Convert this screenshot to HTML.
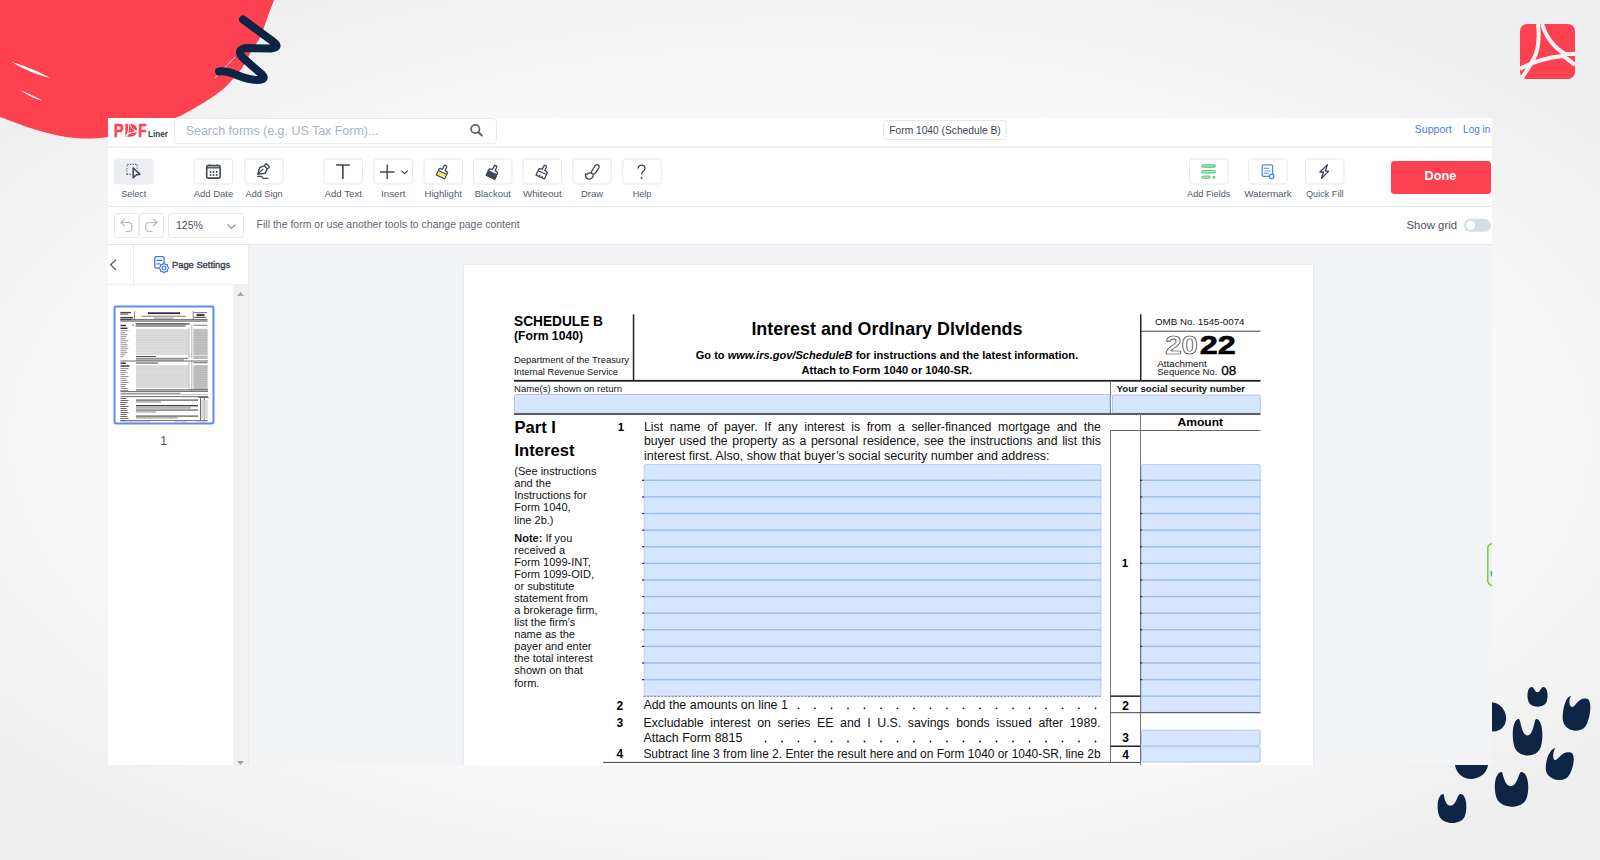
<!DOCTYPE html>
<html><head><meta charset="utf-8"><style>
html,body{margin:0;padding:0;width:1600px;height:860px;overflow:hidden;background:#f4f4f4}
svg{display:block;font-family:"Liberation Sans",sans-serif}
</style></head><body>
<svg width="1600" height="860" viewBox="0 0 1600 860">
<defs><radialGradient id="bg" gradientUnits="userSpaceOnUse" cx="0" cy="0" r="1000" gradientTransform="translate(800,440) scale(1,0.5)"><stop offset="0" stop-color="#fafafa"/><stop offset="0.72" stop-color="#f8f8f8"/><stop offset="0.88" stop-color="#f3f3f3"/><stop offset="1" stop-color="#efefef"/></radialGradient></defs>
<rect x="0" y="0" width="1600" height="860" fill="url(#bg)"/>
<path d="M274,0 C272.8,3.2 269.3,12.8 267,19 C264.7,25.2 262.5,32.3 260,37.5 C257.5,42.7 254.9,45.0 252,50 C249.1,55.0 246.5,61.7 242.4,67.5 C238.3,73.3 231.7,80.5 227.5,84.9 C223.3,89.3 220.9,90.8 217,93.7 C213.1,96.6 208.6,99.6 203.9,102.5 C199.2,105.4 193.5,108.7 189,111.2 C184.5,113.7 183.2,114.6 176.7,117.4 C170.2,120.2 161.4,124.7 150,128 C138.6,131.3 120.5,135.3 108,137 C95.5,138.7 86.3,139.0 75,138 C63.7,137.0 52.5,134.5 40,131 C27.5,127.5 6.7,119.3 0,117 L0,0 Z" fill="#fd4151"/>
<path d="M12,62 C25,66 40,72 50,78 C38,75 22,69 12,62 Z" fill="#fff"/>
<path d="M20,90 C28,93 36,97 43,101 C35,99 27,95 20,90 Z" fill="#fff"/>
<path d="M0,118 C5,120 10,122 14,124 C9,123 4,121 0,119 Z" fill="#fff"/>
<path d="M215,78 L235,57" stroke="#fff" stroke-width="0.8"/>
<path d="M243,19.5 L273,41.5 Q281,47.5 271,48.5 L247,48 Q236,49 242,57 L262,74.5 Q267,80 257,80 Q250,80 238,75.5 Q226,70.5 219,71.5" fill="none" stroke="#0d2445" stroke-width="8" stroke-linecap="round" stroke-linejoin="round"/>
<g transform="translate(1520,24)"><rect x="0" y="0" width="55" height="55" rx="7" fill="#fd4151"/><path d="M18,0 C19.5,14 18.5,27 13,36 C9,44 5,49 1,55" fill="none" stroke="#f4f4f4" stroke-width="4"/><path d="M22,0 C26,13 33,23 45,30 L55,30" fill="none" stroke="#f4f4f4" stroke-width="4"/><path d="M0,45 C12,38 25,34 42,32 C46,33 50,37 55,41" fill="none" stroke="#f4f4f4" stroke-width="4"/></g>
<path d="M1568.2,697.0 C1562.6,697.0 1561.2,713.2 1564.2,722.9 C1567.6,733.0 1584.4,733.7 1588.0,722.9 C1590.8,713.2 1589.4,697.0 1583.8,697.0 C1574.6,697.0 1574.2,707.8 1570.4,707.8 C1566.6,707.8 1566.2,697.0 1568.2,697.0 Z" fill="#0d2445" transform="rotate(10 1576.0 715.0)"/>
<path d="M1518.8,719.0 C1512.6,719.0 1511.1,736.5 1514.5,747.1 C1518.2,758.0 1536.8,758.8 1540.8,747.1 C1543.9,736.5 1542.4,719.0 1536.2,719.0 C1534.3,719.0 1533.6,735.4 1527.5,735.4 C1521.4,735.4 1520.7,719.0 1518.8,719.0 Z" fill="#0d2445"/>
<path d="M1501.7,772.0 C1494.7,772.0 1493.0,788.6 1496.8,798.6 C1501.0,809.0 1522.0,809.7 1526.5,798.6 C1530.0,788.6 1528.3,772.0 1521.3,772.0 C1518.5,772.0 1517.7,786.1 1510.8,786.1 C1503.9,786.1 1503.1,772.0 1501.7,772.0 Z" fill="#0d2445"/>
<path d="M1443.6,794.0 C1437.6,794.0 1436.1,808.0 1439.4,816.3 C1443.0,825.0 1461.0,825.6 1464.9,816.3 C1467.9,808.0 1466.4,794.0 1460.4,794.0 C1457.1,794.0 1456.4,805.8 1450.5,805.8 C1444.6,805.8 1443.9,794.0 1443.6,794.0 Z" fill="#0d2445"/>
<path d="M1551.2,750.0 C1545.6,750.0 1544.2,764.4 1547.2,773.0 C1550.6,782.0 1567.4,782.6 1571.0,773.0 C1573.8,764.4 1572.4,750.0 1566.8,750.0 C1557.3,750.0 1556.9,761.2 1553.4,761.2 C1549.9,761.2 1549.5,750.0 1551.2,750.0 Z" fill="#0d2445" transform="rotate(15 1559.0 766.0)"/>
<path d="M1531.6,687.0 C1527.4,687.0 1526.4,696.5 1528.7,702.1 C1531.2,708.0 1543.8,708.4 1546.5,702.1 C1548.6,696.5 1547.6,687.0 1543.4,687.0 C1540.7,687.0 1540.3,692.2 1537.5,692.2 C1534.7,692.2 1534.3,687.0 1531.6,687.0 Z" fill="#0d2445"/>
<path d="M1488,703 C1500,700 1507,712 1506,720 C1505,728 1498,733 1490,731 Z" fill="#0d2445"/>
<path d="M1455,765 L1488,765 C1487,774 1478,779 1471,779 C1463,779 1456,773 1455,765 Z" fill="#0d2445"/>
<rect x="108" y="118" width="1384" height="647" fill="#fff"/>
<rect x="108" y="146" width="1384" height="2" fill="#eff1f4"/>
<rect x="108" y="206" width="1384" height="1" fill="#e4e7ed"/>
<rect x="108" y="244" width="1384" height="1" fill="#e4e7ed"/>
<text x="113.80" y="136.70" font-size="18.2" font-weight="bold" fill="#fd4151" textLength="9.90" lengthAdjust="spacingAndGlyphs" stroke="#fd4151" stroke-width="0.5">P</text>
<text x="138.20" y="136.70" font-size="18.2" font-weight="bold" fill="#fd4151" textLength="8.40" lengthAdjust="spacingAndGlyphs" stroke="#fd4151" stroke-width="0.5">F</text>
<path d="M125.3,123.8 L130,123.8 C135,123.8 137,127 137,130.2 C137,133.5 135,136.7 130,136.7 L125.3,136.7 Z" fill="#fd4151"/>
<path d="M128.2,123.4 C129.2,128 128.6,132.5 126.2,137.2" fill="none" stroke="#fff" stroke-width="1.1"/>
<path d="M129.6,123.4 C130.8,127.5 132.8,130 137.4,131.2" fill="none" stroke="#fff" stroke-width="0.9"/>
<path d="M125.6,136 C128.5,133 131.5,131.9 137.4,131.6" fill="none" stroke="#fff" stroke-width="1.1"/>
<text x="148.00" y="137.00" font-size="9.4" font-weight="bold" fill="#333b4d" textLength="20.00" lengthAdjust="spacingAndGlyphs">Liner</text>
<rect x="174.5" y="118.5" width="322" height="25.25" fill="#fff" stroke="#e6e9ee" stroke-width="1" rx="4"/>
<text x="185.70" y="134.80" font-size="12.3" fill="#aab3c5" textLength="192.60" lengthAdjust="spacingAndGlyphs">Search forms (e.g. US Tax Form)...</text>
<circle cx="475.3" cy="129" r="4.2" fill="none" stroke="#5f6675" stroke-width="1.8"/>
<line x1="478.3" y1="132" x2="481.8" y2="135.5" stroke="#5f6675" stroke-width="2" stroke-linecap="round"/>
<rect x="883.5" y="120.5" width="122.5" height="19" fill="#fff" stroke="#e3e6ec" stroke-width="1" rx="3"/>
<text x="889.30" y="134.20" font-size="11.2" fill="#3d4452" textLength="111.40" lengthAdjust="spacingAndGlyphs">Form 1040 (Schedule B)</text>
<text x="1414.80" y="133.40" font-size="11.3" fill="#4c7ce3" textLength="37.00" lengthAdjust="spacingAndGlyphs">Support</text>
<text x="1463.10" y="133.40" font-size="11.3" fill="#4c7ce3" textLength="27.30" lengthAdjust="spacingAndGlyphs">Log in</text>
<rect x="114" y="158.5" width="39.5" height="26" fill="#eceef1" rx="3"/>
<text x="121.20" y="197.10" font-size="9.8" fill="#535b6b" textLength="25.10" lengthAdjust="spacingAndGlyphs">Select</text>
<rect x="194.2" y="159.0" width="38.5" height="25" fill="#fff" stroke="#e6e9ee" stroke-width="1" rx="3"/>
<text x="193.70" y="197.10" font-size="9.8" fill="#535b6b" textLength="39.50" lengthAdjust="spacingAndGlyphs">Add Date</text>
<rect x="244.8" y="159.0" width="38.5" height="25" fill="#fff" stroke="#e6e9ee" stroke-width="1" rx="3"/>
<text x="245.55" y="197.10" font-size="9.8" fill="#535b6b" textLength="37.00" lengthAdjust="spacingAndGlyphs">Add Sign</text>
<rect x="324.0" y="159.0" width="38.5" height="25" fill="#fff" stroke="#e6e9ee" stroke-width="1" rx="3"/>
<text x="324.50" y="197.10" font-size="9.8" fill="#535b6b" textLength="37.50" lengthAdjust="spacingAndGlyphs">Add Text</text>
<rect x="374.0" y="159.0" width="38.5" height="25" fill="#fff" stroke="#e6e9ee" stroke-width="1" rx="3"/>
<text x="381.00" y="197.10" font-size="9.8" fill="#535b6b" textLength="24.50" lengthAdjust="spacingAndGlyphs">Insert</text>
<rect x="424.0" y="159.0" width="38.5" height="25" fill="#fff" stroke="#e6e9ee" stroke-width="1" rx="3"/>
<text x="424.50" y="197.10" font-size="9.8" fill="#535b6b" textLength="37.50" lengthAdjust="spacingAndGlyphs">Highlight</text>
<rect x="473.5" y="159.0" width="38.5" height="25" fill="#fff" stroke="#e6e9ee" stroke-width="1" rx="3"/>
<text x="474.65" y="197.10" font-size="9.8" fill="#535b6b" textLength="36.20" lengthAdjust="spacingAndGlyphs">Blackout</text>
<rect x="523.0" y="159.0" width="38.5" height="25" fill="#fff" stroke="#e6e9ee" stroke-width="1" rx="3"/>
<text x="522.88" y="197.10" font-size="9.8" fill="#535b6b" textLength="38.75" lengthAdjust="spacingAndGlyphs">Whiteout</text>
<rect x="572.8" y="159.0" width="38.5" height="25" fill="#fff" stroke="#e6e9ee" stroke-width="1" rx="3"/>
<text x="581.00" y="197.10" font-size="9.8" fill="#535b6b" textLength="22.10" lengthAdjust="spacingAndGlyphs">Draw</text>
<rect x="622.8" y="159.0" width="38.5" height="25" fill="#fff" stroke="#e6e9ee" stroke-width="1" rx="3"/>
<text x="632.67" y="197.10" font-size="9.8" fill="#535b6b" textLength="18.75" lengthAdjust="spacingAndGlyphs">Help</text>
<rect x="1189.5" y="159.0" width="38.5" height="25" fill="#fff" stroke="#e6e9ee" stroke-width="1" rx="3"/>
<text x="1187.10" y="197.10" font-size="9.8" fill="#535b6b" textLength="43.30" lengthAdjust="spacingAndGlyphs">Add Fields</text>
<rect x="1248.7" y="159.0" width="38.5" height="25" fill="#fff" stroke="#e6e9ee" stroke-width="1" rx="3"/>
<text x="1244.15" y="197.10" font-size="9.8" fill="#535b6b" textLength="47.60" lengthAdjust="spacingAndGlyphs">Watermark</text>
<rect x="1305.5" y="159.0" width="38.5" height="25" fill="#fff" stroke="#e6e9ee" stroke-width="1" rx="3"/>
<text x="1306.00" y="197.10" font-size="9.8" fill="#535b6b" textLength="37.50" lengthAdjust="spacingAndGlyphs">Quick Fill</text>
<rect x="1391" y="161" width="100" height="33" fill="#fd4151" rx="3.5"/>
<text x="1424.60" y="180.30" font-size="12" font-weight="bold" fill="#fff" textLength="31.70" lengthAdjust="spacingAndGlyphs">Done</text>
<rect x="114.5" y="213.5" width="24" height="24" fill="#fff" stroke="#e6e9ee" stroke-width="1" rx="2"/>
<rect x="139.5" y="213.5" width="24" height="24" fill="#fff" stroke="#e6e9ee" stroke-width="1" rx="2"/>
<rect x="168.5" y="213.5" width="75" height="24" fill="#fff" stroke="#e6e9ee" stroke-width="1" rx="2"/>
<text x="176.00" y="229.00" font-size="10.6" fill="#4a5160" textLength="27.00" lengthAdjust="spacingAndGlyphs">125%</text>
<path d="M227.5,224.5 L231.5,228.5 L235.5,224.5" fill="none" stroke="#8a909c" stroke-width="1.2"/>
<path d="M120.8,222.5 L124.5,218.8 M120.8,222.5 L124.5,226.2 M121,222.5 L128,222.5 Q132,222.5 132,227 Q132,231.5 128,231.5 L126,231.5" fill="none" stroke="#b5b9c2" stroke-width="1.2" stroke-linecap="round"/>
<path d="M157,222.5 L153.3,218.8 M157,222.5 L153.3,226.2 M157,222.5 L150,222.5 Q145.5,222.5 145.5,227 Q145.5,231.5 150,231.5 L152,231.5" fill="none" stroke="#b5b9c2" stroke-width="1.2" stroke-linecap="round"/>
<text x="256.60" y="228.40" font-size="11" fill="#5f6675" textLength="263.00" lengthAdjust="spacingAndGlyphs">Fill the form or use another tools to change page content</text>
<text x="1406.50" y="229.40" font-size="11.3" fill="#4a5160" textLength="50.60" lengthAdjust="spacingAndGlyphs">Show grid</text>
<rect x="1464" y="218.8" width="27" height="13" fill="#d8dce3" rx="6.5"/>
<circle cx="1470.6" cy="225.3" r="4.6" fill="#fff"/>
<rect x="249" y="245" width="1243" height="520" fill="#f3f4f6"/>
<rect x="108" y="245" width="141" height="520" fill="#fff"/>
<rect x="133" y="245" width="1" height="39" fill="#e8eaee"/>
<rect x="108" y="284" width="141" height="1" fill="#eef0f3"/>
<rect x="233" y="285" width="15" height="480" fill="#f1f1f1"/>
<rect x="248" y="245" width="1" height="520" fill="#e9ebef"/>
<path d="M237,296 L240.5,292 L244,296 Z" fill="#a3a3a3"/>
<path d="M237,761 L240.5,765 L244,761 Z" fill="#a3a3a3"/>
<path d="M116,259.5 L110.7,264.8 L116,270" fill="none" stroke="#5f6675" stroke-width="1.4"/>
<text x="172.00" y="268.10" font-size="9.6" fill="#363d4b" textLength="58.10" lengthAdjust="spacingAndGlyphs" stroke="#363d4b" stroke-width="0.35">Page Settings</text>
<rect x="114.5" y="306.5" width="99" height="117" fill="#fff" stroke="#5b8def" stroke-width="2" rx="2"/>
<text x="163.50" y="444.50" font-size="12" fill="#4a5160" text-anchor="middle">1</text>
<rect x="120.3" y="311.9" width="10.6" height="1.3" fill="#444"/>
<rect x="120.3" y="313.6" width="8" height="1.1" fill="#555"/>
<rect x="120.3" y="316.9" width="12.7" height="1.6" fill="#444"/>
<rect x="120.3" y="319.0" width="11" height="1.2" fill="#666"/>
<rect x="134.0" y="311.3" width="0.7" height="8.5" fill="#555"/>
<rect x="148" y="312.3" width="32" height="1.8" fill="#333"/>
<rect x="141.5" y="315.7" width="44.4" height="1.1" fill="#888"/>
<rect x="154" y="317.6" width="19.4" height="1.1" fill="#999"/>
<rect x="193.6" y="312" width="13.5" height="0.9" fill="#777"/>
<rect x="196.5" y="313.8" width="8" height="2.4" fill="#444"/>
<rect x="194" y="316.8" width="12" height="1.2" fill="#666"/>
<rect x="192.8" y="311.3" width="0.7" height="8.5" fill="#555"/>
<rect x="120.3" y="319.3" width="87.2" height="1.2" fill="#444"/>
<rect x="120.3" y="321.2" width="87.2" height="0.7" fill="#777"/>
<rect x="120.5" y="324.8" width="5.5" height="1.4" fill="#333"/>
<rect x="120.5" y="327.6" width="7" height="1.4" fill="#333"/>
<rect x="120.5" y="330.3" width="8" height="0.9" fill="#888"/>
<rect x="120.5" y="332.3" width="5" height="0.9" fill="#888"/>
<rect x="120.5" y="334.3" width="7" height="0.9" fill="#888"/>
<rect x="120.5" y="336.3" width="6" height="0.9" fill="#888"/>
<rect x="120.5" y="338.3" width="5" height="0.9" fill="#888"/>
<rect x="120.5" y="340.3" width="8" height="0.9" fill="#888"/>
<rect x="120.5" y="342.3" width="6" height="0.9" fill="#888"/>
<rect x="120.5" y="344.3" width="7" height="0.9" fill="#888"/>
<rect x="120.5" y="346.3" width="7" height="0.9" fill="#888"/>
<rect x="120.5" y="348.3" width="8" height="0.9" fill="#888"/>
<rect x="120.5" y="350.3" width="6" height="0.9" fill="#888"/>
<rect x="120.5" y="352.3" width="7" height="0.9" fill="#888"/>
<rect x="120.5" y="354.3" width="5" height="0.9" fill="#888"/>
<rect x="120.5" y="356.3" width="3" height="0.9" fill="#888"/>
<rect x="132.5" y="324.6" width="1.2" height="1.3" fill="#555"/>
<rect x="135.6" y="323.2" width="54" height="1.5" fill="#555"/>
<rect x="135.6" y="325.4" width="50" height="1.3" fill="#666"/>
<rect x="136" y="328.8" width="52.5" height="26.2" fill="#dedede"/>
<rect x="136" y="331.8" width="52.5" height="0.35" fill="#c9c9c9"/>
<rect x="136" y="333.6" width="52.5" height="0.35" fill="#c9c9c9"/>
<rect x="136" y="335.40000000000003" width="52.5" height="0.35" fill="#c9c9c9"/>
<rect x="136" y="337.2" width="52.5" height="0.35" fill="#c9c9c9"/>
<rect x="136" y="339.0" width="52.5" height="0.35" fill="#c9c9c9"/>
<rect x="136" y="340.8" width="52.5" height="0.35" fill="#c9c9c9"/>
<rect x="136" y="342.6" width="52.5" height="0.35" fill="#c9c9c9"/>
<rect x="136" y="344.40000000000003" width="52.5" height="0.35" fill="#c9c9c9"/>
<rect x="136" y="346.2" width="52.5" height="0.35" fill="#c9c9c9"/>
<rect x="136" y="348.0" width="52.5" height="0.35" fill="#c9c9c9"/>
<rect x="136" y="349.8" width="52.5" height="0.35" fill="#c9c9c9"/>
<rect x="136" y="351.6" width="52.5" height="0.35" fill="#c9c9c9"/>
<rect x="136" y="353.40000000000003" width="52.5" height="0.35" fill="#c9c9c9"/>
<rect x="188.7" y="327.5" width="0.6" height="31" fill="#888"/>
<rect x="191.6" y="324.5" width="0.6" height="34" fill="#777"/>
<rect x="193.4" y="324.6" width="14" height="1.3" fill="#999"/>
<rect x="193.4" y="328.8" width="14.2" height="26.2" fill="#c2c2c2"/>
<rect x="193.4" y="331.8" width="14.2" height="0.35" fill="#aaa"/>
<rect x="193.4" y="333.6" width="14.2" height="0.35" fill="#aaa"/>
<rect x="193.4" y="335.40000000000003" width="14.2" height="0.35" fill="#aaa"/>
<rect x="193.4" y="337.2" width="14.2" height="0.35" fill="#aaa"/>
<rect x="193.4" y="339.0" width="14.2" height="0.35" fill="#aaa"/>
<rect x="193.4" y="340.8" width="14.2" height="0.35" fill="#aaa"/>
<rect x="193.4" y="342.6" width="14.2" height="0.35" fill="#aaa"/>
<rect x="193.4" y="344.40000000000003" width="14.2" height="0.35" fill="#aaa"/>
<rect x="193.4" y="346.2" width="14.2" height="0.35" fill="#aaa"/>
<rect x="193.4" y="348.0" width="14.2" height="0.35" fill="#aaa"/>
<rect x="193.4" y="349.8" width="14.2" height="0.35" fill="#aaa"/>
<rect x="193.4" y="351.6" width="14.2" height="0.35" fill="#aaa"/>
<rect x="193.4" y="353.40000000000003" width="14.2" height="0.35" fill="#aaa"/>
<rect x="136" y="356" width="20" height="1.0" fill="#555"/>
<rect x="136" y="357.8" width="52" height="0.9" fill="#666"/>
<rect x="136" y="359.5" width="48" height="0.9" fill="#666"/>
<rect x="193.4" y="355.5" width="14.2" height="3.5" fill="#bbb"/>
<rect x="120.5" y="360.6" width="87.5" height="0.8" fill="#444"/>
<rect x="120.5" y="362.5" width="5.5" height="1.4" fill="#333"/>
<rect x="120.5" y="365.3" width="9" height="1.4" fill="#333"/>
<rect x="120.5" y="368.0" width="8" height="0.9" fill="#888"/>
<rect x="120.5" y="370.0" width="6" height="0.9" fill="#888"/>
<rect x="120.5" y="372.0" width="7" height="0.9" fill="#888"/>
<rect x="120.5" y="374.0" width="5" height="0.9" fill="#888"/>
<rect x="120.5" y="376.0" width="8" height="0.9" fill="#888"/>
<rect x="120.5" y="378.0" width="6" height="0.9" fill="#888"/>
<rect x="120.5" y="380.0" width="7" height="0.9" fill="#888"/>
<rect x="120.5" y="382.0" width="8" height="0.9" fill="#888"/>
<rect x="120.5" y="384.0" width="6" height="0.9" fill="#888"/>
<rect x="120.5" y="386.0" width="5" height="0.9" fill="#888"/>
<rect x="120.5" y="388.0" width="7" height="0.9" fill="#888"/>
<rect x="120.5" y="390.0" width="8" height="0.9" fill="#888"/>
<rect x="136" y="362.5" width="22" height="1.1" fill="#555"/>
<rect x="193.4" y="362" width="14" height="1.3" fill="#888"/>
<rect x="136" y="365" width="52.5" height="23" fill="#dedede"/>
<rect x="136" y="366.8" width="52.5" height="0.35" fill="#c9c9c9"/>
<rect x="136" y="368.6" width="52.5" height="0.35" fill="#c9c9c9"/>
<rect x="136" y="370.40000000000003" width="52.5" height="0.35" fill="#c9c9c9"/>
<rect x="136" y="372.2" width="52.5" height="0.35" fill="#c9c9c9"/>
<rect x="136" y="374.0" width="52.5" height="0.35" fill="#c9c9c9"/>
<rect x="136" y="375.8" width="52.5" height="0.35" fill="#c9c9c9"/>
<rect x="136" y="377.6" width="52.5" height="0.35" fill="#c9c9c9"/>
<rect x="136" y="379.40000000000003" width="52.5" height="0.35" fill="#c9c9c9"/>
<rect x="136" y="381.2" width="52.5" height="0.35" fill="#c9c9c9"/>
<rect x="136" y="383.0" width="52.5" height="0.35" fill="#c9c9c9"/>
<rect x="136" y="384.8" width="52.5" height="0.35" fill="#c9c9c9"/>
<rect x="136" y="386.6" width="52.5" height="0.35" fill="#c9c9c9"/>
<rect x="188.7" y="362" width="0.6" height="28" fill="#888"/>
<rect x="191.6" y="361" width="0.6" height="30" fill="#777"/>
<rect x="193.4" y="365" width="14.2" height="25" fill="#c2c2c2"/>
<rect x="193.4" y="366.8" width="14.2" height="0.35" fill="#aaa"/>
<rect x="193.4" y="368.6" width="14.2" height="0.35" fill="#aaa"/>
<rect x="193.4" y="370.40000000000003" width="14.2" height="0.35" fill="#aaa"/>
<rect x="193.4" y="372.2" width="14.2" height="0.35" fill="#aaa"/>
<rect x="193.4" y="374.0" width="14.2" height="0.35" fill="#aaa"/>
<rect x="193.4" y="375.8" width="14.2" height="0.35" fill="#aaa"/>
<rect x="193.4" y="377.6" width="14.2" height="0.35" fill="#aaa"/>
<rect x="193.4" y="379.40000000000003" width="14.2" height="0.35" fill="#aaa"/>
<rect x="193.4" y="381.2" width="14.2" height="0.35" fill="#aaa"/>
<rect x="193.4" y="383.0" width="14.2" height="0.35" fill="#aaa"/>
<rect x="193.4" y="384.8" width="14.2" height="0.35" fill="#aaa"/>
<rect x="193.4" y="386.6" width="14.2" height="0.35" fill="#aaa"/>
<rect x="193.4" y="388.40000000000003" width="14.2" height="0.35" fill="#aaa"/>
<rect x="136" y="389.4" width="72" height="1.0" fill="#444"/>
<rect x="120.5" y="391" width="87.5" height="0.9" fill="#666"/>
<rect x="120.5" y="392.8" width="60" height="0.9" fill="#777"/>
<rect x="120.5" y="394.3" width="87.5" height="0.6" fill="#999"/>
<rect x="120.5" y="396.3" width="87.5" height="0.8" fill="#444"/>
<rect x="120.5" y="398.0" width="6" height="1.0" fill="#666"/>
<rect x="120.5" y="400.0" width="8" height="1.0" fill="#666"/>
<rect x="120.5" y="402.0" width="7" height="1.0" fill="#666"/>
<rect x="120.5" y="404.0" width="5" height="1.0" fill="#666"/>
<rect x="120.5" y="406.0" width="8" height="1.0" fill="#666"/>
<rect x="120.5" y="408.0" width="6" height="1.0" fill="#666"/>
<rect x="120.5" y="410.0" width="7" height="1.0" fill="#666"/>
<rect x="120.5" y="412.0" width="8" height="1.0" fill="#666"/>
<rect x="120.5" y="414.0" width="6" height="1.0" fill="#666"/>
<rect x="120.5" y="416.0" width="7" height="1.0" fill="#666"/>
<rect x="120.5" y="418.0" width="8" height="1.0" fill="#666"/>
<rect x="120.5" y="420.0" width="5" height="1.0" fill="#666"/>
<rect x="136" y="399.5" width="62" height="1.2" fill="#555"/>
<rect x="136" y="401.5" width="25" height="0.9" fill="#777"/>
<rect x="136" y="405" width="62" height="1.4" fill="#444"/>
<rect x="136" y="407.5" width="55" height="0.9" fill="#666"/>
<rect x="136" y="409.5" width="62" height="1.1" fill="#555"/>
<rect x="136" y="411.5" width="20" height="0.9" fill="#777"/>
<rect x="136" y="415.5" width="62" height="1.2" fill="#555"/>
<rect x="136" y="417.5" width="42" height="0.9" fill="#777"/>
<rect x="200.3" y="397" width="0.7" height="23" fill="#333"/>
<rect x="203.8" y="397" width="0.7" height="23" fill="#333"/>
<rect x="198.5" y="397" width="10" height="1" fill="#666"/>
<rect x="201" y="400" width="2.6" height="19" fill="#ddd"/>
<rect x="204.5" y="400" width="3.3" height="19" fill="#ddd"/>
<rect x="120.5" y="420.2" width="87.5" height="0.8" fill="#555"/>
<rect x="120.5" y="421.6" width="30" height="0.6" fill="#999"/>
<rect x="175" y="421.6" width="12" height="0.6" fill="#999"/>
<rect x="195" y="421.6" width="12" height="0.6" fill="#999"/>
<rect x="462.5" y="263.5" width="852" height="501.5" fill="#eff0f3"/>
<rect x="463.3" y="264.3" width="850.4" height="500.7" fill="#e9ebee"/>
<rect x="464" y="265" width="849" height="500" fill="#fff"/>
<rect x="1488" y="544" width="4" height="41" fill="#efefef"/>
<path d="M1492,543.6 Q1488,544.5 1487.8,547.5 L1487.8,581 Q1488,584.5 1492,585.6" fill="none" stroke="#7cc242" stroke-width="1.4"/>
<ellipse cx="1491.4" cy="573.5" rx="0.8" ry="3" fill="#3aa6b9"/>
<path d="M126.9,174.4 L126.9,164.4 L137.2,164.4 L137.2,170" fill="none" stroke="#3f4758" stroke-width="1.1" stroke-dasharray="1.3,1.3" opacity="0.85"/>
<path d="M126.9,174.4 L132,174.4" fill="none" stroke="#3f4758" stroke-width="1.1" stroke-dasharray="1.3,1.3" opacity="0.85"/>
<path d="M133.2,168 L139.8,174.1 L136.2,175 L133.2,177.7 Z" fill="#eceef1" stroke="#3f4758" stroke-width="1.6" stroke-linejoin="round"/>
<rect x="206.7" y="165.6" width="13.4" height="12.5" rx="1.6" fill="none" stroke="#3f4758" stroke-width="1.6"/>
<line x1="206.7" y1="167.8" x2="220.1" y2="167.8" stroke="#3f4758" stroke-width="1.3"/>
<path d="M209.6,164.3 L209.6,166 M217.3,164.3 L217.3,166" stroke="#3f4758" stroke-width="1"/>
<circle cx="210.5" cy="172" r="0.95" fill="#3f4758"/>
<circle cx="210.5" cy="175" r="0.95" fill="#3f4758"/>
<circle cx="213.5" cy="172" r="0.95" fill="#3f4758"/>
<circle cx="213.5" cy="175" r="0.95" fill="#3f4758"/>
<circle cx="216.6" cy="172" r="0.95" fill="#3f4758"/>
<circle cx="216.6" cy="175" r="0.95" fill="#3f4758"/>
<path d="M257.8,174.2 L259.6,167.6 L264.2,165.8 L267.2,168.8 L265.2,173.4 Z" fill="none" stroke="#3f4758" stroke-width="1.4" stroke-linejoin="round"/>
<path d="M264.3,165.6 L266.3,163.8 L269.5,167 L267.5,169" fill="none" stroke="#3f4758" stroke-width="1.3" stroke-linejoin="round"/>
<path d="M258,174 L263.3,168.8" stroke="#3f4758" stroke-width="1.1"/>
<path d="M257.6,176.3 L261.3,176.3 Q262,176.3 262.2,177.4 Q262.4,178.4 263.4,178.4 L267.8,178.4" fill="none" stroke="#3f4758" stroke-width="1.3" stroke-linecap="round"/>
<path d="M336,165 L349.8,165 M342.9,165 L342.9,179" stroke="#3f4758" stroke-width="1.6"/>
<path d="M380,172 L394.5,172 M387.2,164.6 L387.2,179" stroke="#3f4758" stroke-width="1.4"/>
<path d="M401.3,170.6 L404.5,173.6 L407.7,170.6" fill="none" stroke="#3f4758" stroke-width="1.2"/>
<g transform="translate(442.4,172.9) rotate(25)"><path d="M-4.6,-2.6 L-1.4,-3.6 L-1.4,-6.9 A1.4,1.4 0 0 1 1.4,-6.9 L1.4,-3.6 L4.6,-2.6 L4.6,4.4 L-4.6,4.4 Z" fill="#fff" stroke="#3f4758" stroke-width="1.3" stroke-linejoin="round"/><path d="M-3.9,0.2 L3.9,0.2 L3.9,3.8 L2.6,3.8 L2.6,2.4 L1.6,2.4 L1.6,3.8 L0.4,3.8 L0.4,2.2 L-1.0,2.2 L-1.0,3.8 L-3.9,3.8 Z" fill="#f3ea3c"/><line x1="-4.6" y1="-0.4" x2="4.6" y2="-0.4" stroke="#3f4758" stroke-width="1.1"/></g>
<g transform="translate(492.4,173.2) rotate(25)"><path d="M-4.6,-2.6 L-1.4,-3.6 L-1.4,-6.9 A1.4,1.4 0 0 1 1.4,-6.9 L1.4,-3.6 L4.6,-2.6 L4.6,4.4 L-4.6,4.4 Z" fill="#fff" stroke="#3f4758" stroke-width="1.3" stroke-linejoin="round"/><path d="M-4.6,-0.4 L4.6,-0.4 L4.6,4.4 L-4.6,4.4 Z" fill="#3f4758" stroke="#3f4758" stroke-width="1.3" stroke-linejoin="round"/></g>
<g transform="translate(542.1,173.0) rotate(25)"><path d="M-4.6,-2.6 L-1.4,-3.6 L-1.4,-6.9 A1.4,1.4 0 0 1 1.4,-6.9 L1.4,-3.6 L4.6,-2.6 L4.6,4.4 L-4.6,4.4 Z" fill="#fff" stroke="#3f4758" stroke-width="1.3" stroke-linejoin="round"/><line x1="-4.6" y1="-0.4" x2="4.6" y2="-0.4" stroke="#3f4758" stroke-width="1.1"/><path d="M-1.2,4.4 L-1.2,2.2 M1.6,4.4 L1.6,2.6" stroke="#3f4758" stroke-width="1.1"/></g>
<path d="M598.9,165.6 Q597.3,163.6 595.2,165.4 L591.6,171.5 Q590.9,173.8 593.2,174.2 Q594.5,174.3 595.6,172.9 L598.9,167.6 Q599.5,166.5 598.9,165.6 Z" fill="none" stroke="#3f4758" stroke-width="1.3"/>
<path d="M591.6,172.5 Q588.3,172.6 586.6,174.6 L585.6,173.6 Q585,177 586.8,178.4 Q589.5,180 592.1,177.7 Q593.4,176.4 593.3,174.5" fill="none" stroke="#3f4758" stroke-width="1.3" stroke-linejoin="round"/>
<path d="M638.2,168.6 Q638.2,165.2 641.6,165.2 Q645,165.2 645,168.3 Q645,170.2 643,171.4 Q641.6,172.3 641.6,174.4" fill="none" stroke="#3f4758" stroke-width="1.3"/>
<circle cx="641.6" cy="177.9" r="0.95" fill="#3f4758"/>
<rect x="1201.8999999999999" y="164.9" width="13.40" height="2.25" rx="1.2" fill="#b9ecc9" stroke="#52cc79" stroke-width="1.2"/>
<rect x="1201.8999999999999" y="170.5" width="13.40" height="2.30" rx="1.2" fill="#b9ecc9" stroke="#52cc79" stroke-width="1.2"/>
<rect x="1201.8999999999999" y="176.0" width="8.10" height="2.25" rx="1.2" fill="#b9ecc9" stroke="#52cc79" stroke-width="1.2"/>
<path d="M1214,175.4 L1215.8,177.2 L1214,179 L1212.2,177.2 Z" fill="#52cc79"/>
<rect x="1262.2" y="164.8" width="10.4" height="11.5" rx="1.4" fill="#fff" stroke="#4f88ee" stroke-width="1.3"/>
<path d="M1264.3,168.3 L1268.6,168.3 M1264.3,173.2 L1268.4,173.2" stroke="#4f88ee" stroke-width="1.1" stroke-linecap="round"/>
<path d="M1264.3,171 L1270.7,171" stroke="#8fb5f5" stroke-width="1.3"/>
<circle cx="1271.6" cy="176.4" r="2.2" fill="#fff" stroke="#4f88ee" stroke-width="1.3"/>
<path d="M1327.4,164.6 L1319.9,172 L1323.5,172 L1321.5,178.3 L1328.7,171.1 L1325.4,171.1 Z" fill="none" stroke="#3f4758" stroke-width="1.3" stroke-linejoin="round"/>
<rect x="154.8" y="256.5" width="9.3" height="11.7" rx="1.4" fill="#fff" stroke="#3a78f2" stroke-width="1.25"/>
<path d="M156.9,260.4 L161.6,260.4 M156.9,263.9 L159.6,263.9" stroke="#3a78f2" stroke-width="1.2" stroke-linecap="round"/>
<polygon points="168.70,268.00 167.60,269.49 167.32,271.32 165.49,271.60 164.00,272.70 162.51,271.60 160.68,271.32 160.40,269.49 159.30,268.00 160.40,266.51 160.68,264.68 162.51,264.40 164.00,263.30 165.49,264.40 167.32,264.68 167.60,266.51" fill="#fff" stroke="#3a78f2" stroke-width="1.2" stroke-linejoin="round"/>
<rect x="162.3" y="266.3" width="3.4" height="3.4" rx="0.8" fill="none" stroke="#3a78f2" stroke-width="1.1"/>
<clipPath id="pg"><rect x="464" y="265" width="849" height="500"/></clipPath>
<g clip-path="url(#pg)">
<text x="514.00" y="325.90" font-size="13.8" font-weight="bold" textLength="89.00" lengthAdjust="spacingAndGlyphs">SCHEDULE B</text>
<text x="514.00" y="339.90" font-size="12.5" font-weight="bold" textLength="69.00" lengthAdjust="spacingAndGlyphs">(Form 1040)</text>
<text x="514.00" y="363.10" font-size="9.5" fill="#111" textLength="115.00" lengthAdjust="spacingAndGlyphs">Department of the Treasury</text>
<text x="514.00" y="375.30" font-size="9.5" fill="#111" textLength="104.00" lengthAdjust="spacingAndGlyphs">Internal Revenue Service</text>
<rect x="632.8" y="314.3" width="1.5" height="66.5" fill="#222"/>
<text x="751.40" y="334.90" font-size="18.5" font-weight="bold" textLength="271.00" lengthAdjust="spacingAndGlyphs">Interest and Ordlnary Dlvldends</text>
<g transform="translate(695.70,358.80) scale(1.0256,1)"><text x="0" y="0" font-size="10.8" fill="#000" xml:space="preserve"><tspan font-weight="bold">Go to </tspan><tspan font-weight="bold" font-style="italic">www.irs.gov/ScheduleB</tspan><tspan font-weight="bold"> for instructions and the latest information.</tspan></text></g>
<text x="801.50" y="374.30" font-size="10.8" font-weight="bold" textLength="170.60" lengthAdjust="spacingAndGlyphs">Attach to Form 1040 or 1040-SR.</text>
<rect x="1140" y="314.3" width="1.5" height="66.5" fill="#222"/>
<text x="1155.00" y="325.00" font-size="9.2" fill="#111" textLength="89.50" lengthAdjust="spacingAndGlyphs">OMB No. 1545-0074</text>
<rect x="1141" y="330.7" width="119.5" height="1" fill="#444"/>
<text x="1165.20" y="354.40" font-size="26" font-weight="bold" fill="#fff" textLength="32.60" lengthAdjust="spacingAndGlyphs" stroke="#222" stroke-width="0.6">20</text>
<text x="1199.80" y="354.40" font-size="26" font-weight="bold" textLength="36.00" lengthAdjust="spacingAndGlyphs" stroke="#000" stroke-width="0.6">22</text>
<text x="1157.30" y="366.60" font-size="8.6" fill="#111" textLength="49.40" lengthAdjust="spacingAndGlyphs">Attachment</text>
<text x="1157.30" y="374.50" font-size="8.6" fill="#111" textLength="60.00" lengthAdjust="spacingAndGlyphs">Sequence No.</text>
<text x="1221.30" y="375.30" font-size="13" textLength="15.10" lengthAdjust="spacingAndGlyphs" stroke="#000" stroke-width="0.3">08</text>
<rect x="514" y="379.9" width="746.5" height="1.8" fill="#222"/>
<text x="514.00" y="391.60" font-size="9" fill="#111" textLength="108.00" lengthAdjust="spacingAndGlyphs">Name(s) shown on return</text>
<rect x="1110" y="381" width="1" height="33" fill="#777"/>
<text x="1116.60" y="392.20" font-size="9" font-weight="bold" fill="#111" textLength="128.50" lengthAdjust="spacingAndGlyphs">Your social security number</text>
<rect x="514.50" y="394.50" width="595.30" height="18.80" fill="#d5e6fe" stroke="#a9c6f6" stroke-width="1" rx="1.2"/>
<rect x="1112.50" y="395.00" width="147.80" height="18.30" fill="#d5e6fe" stroke="#a9c6f6" stroke-width="1" rx="1.2"/>
<rect x="514" y="413.3" width="746.5" height="1.5" fill="#333"/>
<text x="514.50" y="432.60" font-size="15.6" font-weight="bold" textLength="41.40" lengthAdjust="spacingAndGlyphs">Part I</text>
<text x="514.50" y="456.00" font-size="15.6" font-weight="bold" textLength="60.00" lengthAdjust="spacingAndGlyphs">Interest</text>
<text x="617.70" y="430.60" font-size="11.5" font-weight="bold">1</text>
<text x="644.00" y="430.50" font-size="12.3" fill="#111" word-spacing="3.231">List name of payer. If any interest is from a seller-financed mortgage and the</text>
<text x="644.00" y="445.10" font-size="12.3" fill="#111" word-spacing="1.178">buyer used the property as a personal residence, see the instructions and list this</text>
<text x="644.00" y="459.70" font-size="12.3" fill="#111" textLength="405.60" lengthAdjust="spacingAndGlyphs">interest first. Also, show that buyer’s social security number and address:</text>
<text x="1177.40" y="426.10" font-size="11.5" font-weight="bold" textLength="45.70" lengthAdjust="spacingAndGlyphs">Amount</text>
<rect x="1140" y="414" width="1" height="351" fill="#777"/>
<rect x="1110.5" y="430" width="150" height="1" fill="#666"/>
<rect x="1110" y="430.5" width="1" height="332" fill="#777"/>
<text x="514.30" y="475.40" font-size="10.5" fill="#111" textLength="82.11" lengthAdjust="spacingAndGlyphs">(See instructions</text>
<text x="514.30" y="487.43" font-size="10.5" fill="#111" textLength="36.78" lengthAdjust="spacingAndGlyphs">and the</text>
<text x="514.30" y="499.46" font-size="10.5" fill="#111" textLength="72.30" lengthAdjust="spacingAndGlyphs">Instructions for</text>
<text x="514.30" y="511.49" font-size="10.5" fill="#111" textLength="56.37" lengthAdjust="spacingAndGlyphs">Form 1040,</text>
<text x="514.30" y="523.52" font-size="10.5" fill="#111" textLength="39.22" lengthAdjust="spacingAndGlyphs">line 2b.)</text>
<g transform="translate(514.30,541.90) scale(1.0464,1)"><text x="0" y="0" font-size="10.5" fill="#111" xml:space="preserve"><tspan font-weight="bold">Note:</tspan><tspan> If you</tspan></text></g>
<text x="514.30" y="553.95" font-size="10.5" fill="#111" textLength="50.87" lengthAdjust="spacingAndGlyphs">received a</text>
<text x="514.30" y="566.00" font-size="10.5" fill="#111" textLength="76.58" lengthAdjust="spacingAndGlyphs">Form 1099-INT,</text>
<text x="514.30" y="578.05" font-size="10.5" fill="#111" textLength="79.65" lengthAdjust="spacingAndGlyphs">Form 1099-OID,</text>
<text x="514.30" y="590.10" font-size="10.5" fill="#111" textLength="60.06" lengthAdjust="spacingAndGlyphs">or substitute</text>
<text x="514.30" y="602.15" font-size="10.5" fill="#111" textLength="73.53" lengthAdjust="spacingAndGlyphs">statement from</text>
<text x="514.30" y="614.20" font-size="10.5" fill="#111" textLength="83.33" lengthAdjust="spacingAndGlyphs">a brokerage firm,</text>
<text x="514.30" y="626.25" font-size="10.5" fill="#111" textLength="61.06" lengthAdjust="spacingAndGlyphs">list the firm’s</text>
<text x="514.30" y="638.30" font-size="10.5" fill="#111" textLength="60.68" lengthAdjust="spacingAndGlyphs">name as the</text>
<text x="514.30" y="650.35" font-size="10.5" fill="#111" textLength="77.23" lengthAdjust="spacingAndGlyphs">payer and enter</text>
<text x="514.30" y="662.40" font-size="10.5" fill="#111" textLength="78.45" lengthAdjust="spacingAndGlyphs">the total interest</text>
<text x="514.30" y="674.45" font-size="10.5" fill="#111" textLength="68.65" lengthAdjust="spacingAndGlyphs">shown on that</text>
<text x="514.30" y="686.50" font-size="10.5" fill="#111" textLength="25.11" lengthAdjust="spacingAndGlyphs">form.</text>
<rect x="644.20" y="464.60" width="456.80" height="231.30" rx="1.2" fill="#d5e6fe" stroke="#b3cdf8" stroke-width="1"/>
<rect x="644.00" y="479.60" width="457.20" height="1.4" fill="#9dbdf6"/>
<rect x="644.00" y="496.21" width="457.20" height="1.4" fill="#9dbdf6"/>
<rect x="644.00" y="512.82" width="457.20" height="1.4" fill="#9dbdf6"/>
<rect x="644.00" y="529.42" width="457.20" height="1.4" fill="#9dbdf6"/>
<rect x="644.00" y="546.03" width="457.20" height="1.4" fill="#9dbdf6"/>
<rect x="644.00" y="562.64" width="457.20" height="1.4" fill="#9dbdf6"/>
<rect x="644.00" y="579.25" width="457.20" height="1.4" fill="#9dbdf6"/>
<rect x="644.00" y="595.86" width="457.20" height="1.4" fill="#9dbdf6"/>
<rect x="644.00" y="612.46" width="457.20" height="1.4" fill="#9dbdf6"/>
<rect x="644.00" y="629.07" width="457.20" height="1.4" fill="#9dbdf6"/>
<rect x="644.00" y="645.68" width="457.20" height="1.4" fill="#9dbdf6"/>
<rect x="644.00" y="662.29" width="457.20" height="1.4" fill="#9dbdf6"/>
<rect x="644.00" y="678.90" width="457.20" height="1.4" fill="#9dbdf6"/>
<rect x="1141.50" y="464.60" width="118.70" height="247.70" rx="1.2" fill="#d5e6fe" stroke="#b3cdf8" stroke-width="1"/>
<rect x="1141.30" y="479.60" width="119.10" height="1.4" fill="#9dbdf6"/>
<rect x="1141.30" y="496.21" width="119.10" height="1.4" fill="#9dbdf6"/>
<rect x="1141.30" y="512.82" width="119.10" height="1.4" fill="#9dbdf6"/>
<rect x="1141.30" y="529.42" width="119.10" height="1.4" fill="#9dbdf6"/>
<rect x="1141.30" y="546.03" width="119.10" height="1.4" fill="#9dbdf6"/>
<rect x="1141.30" y="562.64" width="119.10" height="1.4" fill="#9dbdf6"/>
<rect x="1141.30" y="579.25" width="119.10" height="1.4" fill="#9dbdf6"/>
<rect x="1141.30" y="595.86" width="119.10" height="1.4" fill="#9dbdf6"/>
<rect x="1141.30" y="612.46" width="119.10" height="1.4" fill="#9dbdf6"/>
<rect x="1141.30" y="629.07" width="119.10" height="1.4" fill="#9dbdf6"/>
<rect x="1141.30" y="645.68" width="119.10" height="1.4" fill="#9dbdf6"/>
<rect x="1141.30" y="662.29" width="119.10" height="1.4" fill="#9dbdf6"/>
<rect x="1141.30" y="678.90" width="119.10" height="1.4" fill="#9dbdf6"/>
<rect x="1141.30" y="695.50" width="119.10" height="1.4" fill="#9dbdf6"/>
<rect x="642" y="479.70" width="2.2" height="1.2" fill="#333"/>
<rect x="1140" y="479.70" width="2.2" height="1.2" fill="#333"/>
<rect x="642" y="496.31" width="2.2" height="1.2" fill="#333"/>
<rect x="1140" y="496.31" width="2.2" height="1.2" fill="#333"/>
<rect x="642" y="512.92" width="2.2" height="1.2" fill="#333"/>
<rect x="1140" y="512.92" width="2.2" height="1.2" fill="#333"/>
<rect x="642" y="529.52" width="2.2" height="1.2" fill="#333"/>
<rect x="1140" y="529.52" width="2.2" height="1.2" fill="#333"/>
<rect x="642" y="546.13" width="2.2" height="1.2" fill="#333"/>
<rect x="1140" y="546.13" width="2.2" height="1.2" fill="#333"/>
<rect x="642" y="562.74" width="2.2" height="1.2" fill="#333"/>
<rect x="1140" y="562.74" width="2.2" height="1.2" fill="#333"/>
<rect x="642" y="579.35" width="2.2" height="1.2" fill="#333"/>
<rect x="1140" y="579.35" width="2.2" height="1.2" fill="#333"/>
<rect x="642" y="595.96" width="2.2" height="1.2" fill="#333"/>
<rect x="1140" y="595.96" width="2.2" height="1.2" fill="#333"/>
<rect x="642" y="612.56" width="2.2" height="1.2" fill="#333"/>
<rect x="1140" y="612.56" width="2.2" height="1.2" fill="#333"/>
<rect x="642" y="629.17" width="2.2" height="1.2" fill="#333"/>
<rect x="1140" y="629.17" width="2.2" height="1.2" fill="#333"/>
<rect x="642" y="645.78" width="2.2" height="1.2" fill="#333"/>
<rect x="1140" y="645.78" width="2.2" height="1.2" fill="#333"/>
<rect x="642" y="662.39" width="2.2" height="1.2" fill="#333"/>
<rect x="1140" y="662.39" width="2.2" height="1.2" fill="#333"/>
<rect x="642" y="679.00" width="2.2" height="1.2" fill="#333"/>
<rect x="1140" y="679.00" width="2.2" height="1.2" fill="#333"/>
<text x="1125.00" y="566.70" font-size="11.5" font-weight="bold" text-anchor="middle">1</text>
<line x1="643.6" y1="696.4" x2="1101.5" y2="696.4" stroke="#666" stroke-width="0.8" stroke-dasharray="2,1.5"/>
<text x="616.50" y="709.50" font-size="12" font-weight="bold">2</text>
<text x="643.40" y="709.20" font-size="12.3" fill="#111" textLength="144.50" lengthAdjust="spacingAndGlyphs">Add the amounts on line 1</text>
<circle cx="798.50" cy="708.3" r="0.9" fill="#111"/>
<circle cx="815.00" cy="708.3" r="0.9" fill="#111"/>
<circle cx="831.50" cy="708.3" r="0.9" fill="#111"/>
<circle cx="848.00" cy="708.3" r="0.9" fill="#111"/>
<circle cx="864.50" cy="708.3" r="0.9" fill="#111"/>
<circle cx="881.00" cy="708.3" r="0.9" fill="#111"/>
<circle cx="897.50" cy="708.3" r="0.9" fill="#111"/>
<circle cx="914.00" cy="708.3" r="0.9" fill="#111"/>
<circle cx="930.50" cy="708.3" r="0.9" fill="#111"/>
<circle cx="947.00" cy="708.3" r="0.9" fill="#111"/>
<circle cx="963.50" cy="708.3" r="0.9" fill="#111"/>
<circle cx="980.00" cy="708.3" r="0.9" fill="#111"/>
<circle cx="996.50" cy="708.3" r="0.9" fill="#111"/>
<circle cx="1013.00" cy="708.3" r="0.9" fill="#111"/>
<circle cx="1029.50" cy="708.3" r="0.9" fill="#111"/>
<circle cx="1046.00" cy="708.3" r="0.9" fill="#111"/>
<circle cx="1062.50" cy="708.3" r="0.9" fill="#111"/>
<circle cx="1079.00" cy="708.3" r="0.9" fill="#111"/>
<circle cx="1095.50" cy="708.3" r="0.9" fill="#111"/>
<text x="1125.50" y="709.60" font-size="12" font-weight="bold" text-anchor="middle">2</text>
<rect x="1110.5" y="695.4" width="30" height="1.5" fill="#222"/>
<rect x="1110.5" y="712.2" width="150" height="1" fill="#444"/>
<text x="616.50" y="726.50" font-size="12" font-weight="bold">3</text>
<text x="643.50" y="726.60" font-size="12.3" fill="#111" word-spacing="3.222">Excludable interest on series EE and I U.S. savings bonds issued after 1989.</text>
<text x="643.40" y="742.40" font-size="12.3" fill="#111" textLength="99.00" lengthAdjust="spacingAndGlyphs">Attach Form 8815</text>
<circle cx="765.50" cy="741.5" r="0.9" fill="#111"/>
<circle cx="782.00" cy="741.5" r="0.9" fill="#111"/>
<circle cx="798.50" cy="741.5" r="0.9" fill="#111"/>
<circle cx="815.00" cy="741.5" r="0.9" fill="#111"/>
<circle cx="831.50" cy="741.5" r="0.9" fill="#111"/>
<circle cx="848.00" cy="741.5" r="0.9" fill="#111"/>
<circle cx="864.50" cy="741.5" r="0.9" fill="#111"/>
<circle cx="881.00" cy="741.5" r="0.9" fill="#111"/>
<circle cx="897.50" cy="741.5" r="0.9" fill="#111"/>
<circle cx="914.00" cy="741.5" r="0.9" fill="#111"/>
<circle cx="930.50" cy="741.5" r="0.9" fill="#111"/>
<circle cx="947.00" cy="741.5" r="0.9" fill="#111"/>
<circle cx="963.50" cy="741.5" r="0.9" fill="#111"/>
<circle cx="980.00" cy="741.5" r="0.9" fill="#111"/>
<circle cx="996.50" cy="741.5" r="0.9" fill="#111"/>
<circle cx="1013.00" cy="741.5" r="0.9" fill="#111"/>
<circle cx="1029.50" cy="741.5" r="0.9" fill="#111"/>
<circle cx="1046.00" cy="741.5" r="0.9" fill="#111"/>
<circle cx="1062.50" cy="741.5" r="0.9" fill="#111"/>
<circle cx="1079.00" cy="741.5" r="0.9" fill="#111"/>
<circle cx="1095.50" cy="741.5" r="0.9" fill="#111"/>
<rect x="1141.50" y="730.20" width="118.70" height="15.60" fill="#d5e6fe" stroke="#a9c6f6" stroke-width="1" rx="1.2"/>
<text x="1125.50" y="741.90" font-size="12" font-weight="bold" text-anchor="middle">3</text>
<rect x="1110.5" y="745.5" width="30" height="1.5" fill="#222"/>
<text x="616.50" y="757.80" font-size="12" font-weight="bold">4</text>
<text x="643.40" y="757.60" font-size="12.3" fill="#111" textLength="457.20" lengthAdjust="spacingAndGlyphs">Subtract line 3 from line 2. Enter the result here and on Form 1040 or 1040-SR, line 2b</text>
<rect x="1141.50" y="746.80" width="118.70" height="15.20" fill="#d5e6fe" stroke="#a9c6f6" stroke-width="1" rx="1.2"/>
<text x="1125.50" y="758.50" font-size="12" font-weight="bold" text-anchor="middle">4</text>
<rect x="603" y="761.9" width="537.5" height="1" fill="#444"/>
</g>
</svg></body></html>
